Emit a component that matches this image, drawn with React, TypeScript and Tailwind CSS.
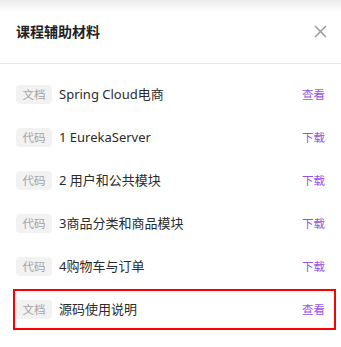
import React from "react";

type Item = { tag: string; title: string; action: string; active?: boolean };

const items: Item[] = [
  { tag: "文档", title: "Spring Cloud电商", action: "查看" },
  { tag: "代码", title: "1 EurekaServer", action: "下载" },
  { tag: "代码", title: "2 用户和公共模块", action: "下载" },
  { tag: "代码", title: "3商品分类和商品模块", action: "下载" },
  { tag: "代码", title: "4购物车与订单", action: "下载" },
  { tag: "文档", title: "源码使用说明", action: "查看", active: true },
];

export default function App() {
  return (
    <div
      className="relative w-[341px] h-[347px] bg-white overflow-hidden"
      style={{ fontFamily: '"Noto Sans", "Noto Sans CJK SC", sans-serif' }}
    >
      <div className="pointer-events-none absolute left-0 top-0 w-full h-[12px] bg-gradient-to-b from-[#ebebeb] to-white" />
      <div className="flex items-center justify-between h-[63px] pl-[16px] pr-[14px] pt-[1px]">
        <div className="text-[14px] font-semibold text-[#222] leading-none">课程辅助材料</div>
        <svg width="13" height="13" viewBox="0 0 13 13" className="mb-[2px]">
          <path d="M1 1 L12 12 M12 1 L1 12" stroke="#9a9a9a" strokeWidth="1.5" />
        </svg>
      </div>
      <div className="h-px bg-[#e6e6e6]" />
      <div className="flex flex-col gap-[2px] pt-[10px]">
        {items.map((it, i) => (
          <div
            key={i}
            className={
              "ml-[13px] mr-[5px] h-[41px] flex items-center pl-[1px] pr-[9px] border-2 " +
              (it.active ? "border-[#ff0000]" : "border-transparent")
            }
          >
            <span className="w-[36px] h-[19px] flex items-center justify-center rounded-[4px] bg-[#f2f2f3] text-[11.5px] text-[#a3a3a3]">
              {it.tag}
            </span>
            <span className="ml-[7px] text-[13px] text-[#2b2b2b] flex-1">{it.title}</span>
            <span className="text-[11.5px] text-[#9452e6]">{it.action}</span>
          </div>
        ))}
      </div>
    </div>
  );
}
